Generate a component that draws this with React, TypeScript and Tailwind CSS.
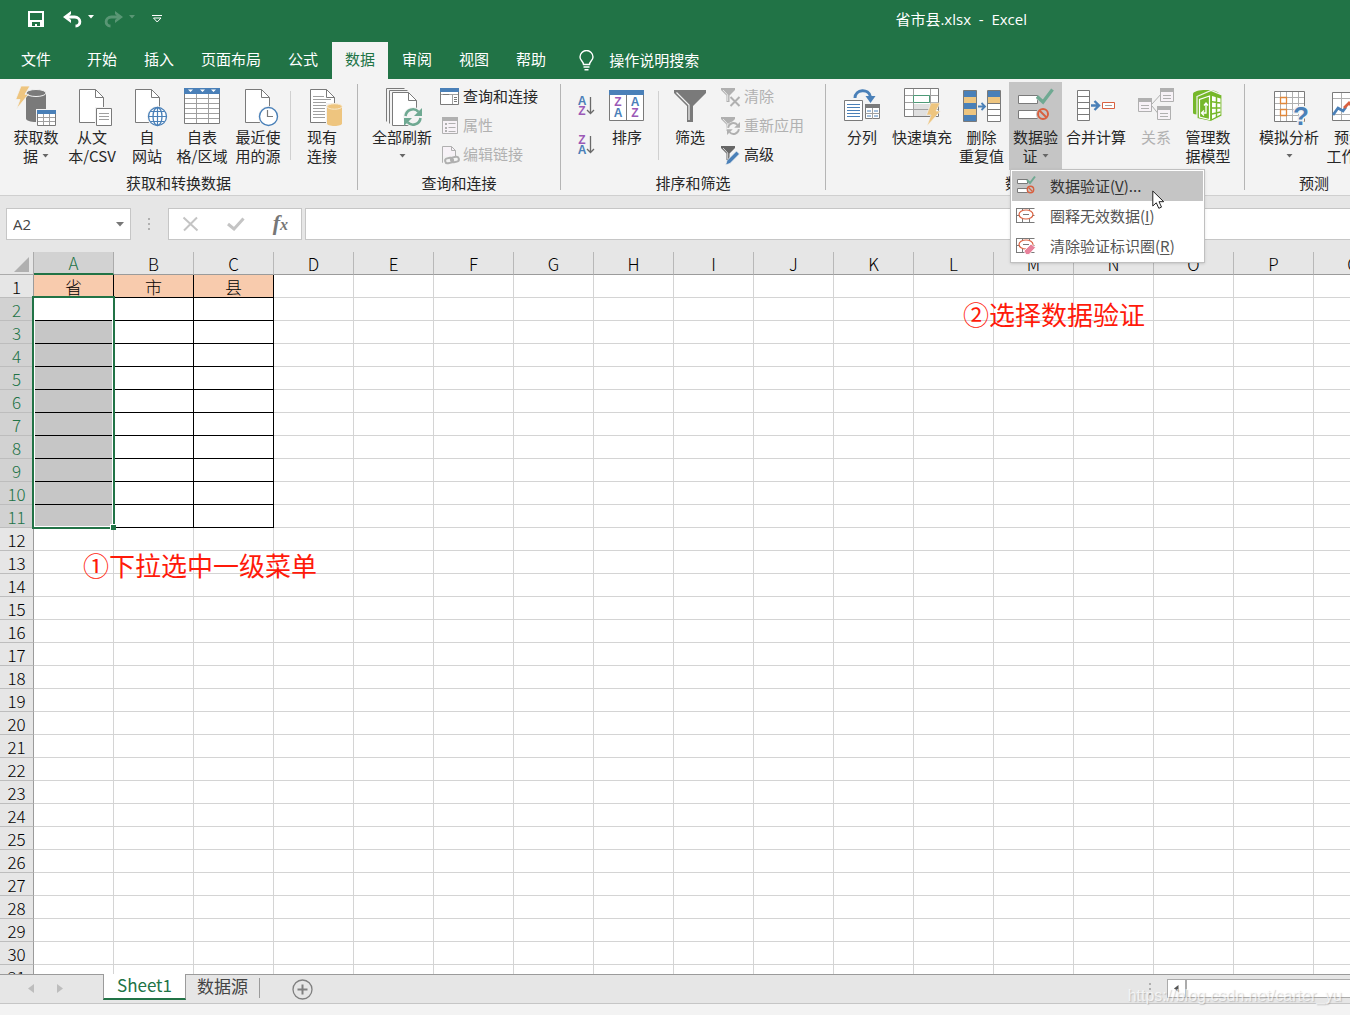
import React from "react";

const COLS = "ABCDEFGHIJKLMNOPQ".split("");
const ROWS = Array.from({ length: 31 }, (_, i) => i + 1);
const HEAD = ["省", "市", "县"];
const GRAY = "#7a7a7a";
const BLUE = "#4a80b8";
const PALE = "#b0b0b0";
const PURPLE = "#9b59b6";
const GREEN = "#6fa992";
const GOLD = "#eec57f";
const RED = "#d9603f";

type Kids = { children?: React.ReactNode };

function Pic({ children }: Kids) {
  return (
    <svg width="44" height="44" viewBox="0 0 44 44" fill="none" className="-mb-px shrink-0" aria-hidden="true">
      {children}
    </svg>
  );
}

function SmallPic({ children }: Kids) {
  return (
    <svg width="22" height="22" viewBox="0 0 22 22" fill="none" className="shrink-0" aria-hidden="true">
      {children}
    </svg>
  );
}

function Caret({ className = "" }: { className?: string }) {
  return (
    <svg width="7" height="4" viewBox="0 0 7 4" className={"inline-block " + className} aria-hidden="true">
      <path d="M0.500 0h6L3.500 3.500z" fill="#666" />
    </svg>
  );
}

/* Page with a folded corner, 25 x 34 */
function Sheet({ x, y = 5 }: { x: number; y?: number }) {
  return (
    <g transform={`translate(${x} ${y})`} stroke={GRAY}>
      <path d="M.5.5h16l8 8v25H.5z" fill="#fff" />
      <path d="M16.500.5v8h8" />
    </g>
  );
}

const GetDataIcon = () => (
  <Pic>
    <path d="M12 9.500v25c0 2 4.500 3.500 10 3.500s10-1.500 10-3.500v-25z" fill={GRAY} />
    <ellipse cx="22" cy="9" rx="10" ry="3.500" fill={GRAY} stroke="#f3f3f3" />
    <path d="M7 2h9l-5 8.300h3.500L2.500 25l3.500-9.500H1.700z" fill={GOLD} stroke="#f3f3f3" strokeWidth=".8" />
    <path d="M22 25h21v18H22z" fill="#f3f3f3" />
    <path d="M23.500 26.500h18v15h-18z" fill="#fff" stroke={GRAY} />
    <path d="M23 26h19v4H23z" fill={BLUE} />
    <path d="M24 33.500h17M24 37.500h17M29.500 30v11M35.500 30v11" stroke="#a0a0a0" />
  </Pic>
);

const FromTextIcon = () => (
  <Pic>
    <Sheet x={9} />
    <path d="M25 23h18v20H25z" fill="#f3f3f3" />
    <path d="M26.500 24.500h15v17h-15z" fill="#fff" stroke={GRAY} />
    <path d="M29 29.500h10M29 32.500h10M29 35.500h10" stroke="#a0a0a0" />
  </Pic>
);

const WebIcon = () => (
  <Pic>
    <Sheet x={10} />
    <circle cx="32.500" cy="32.500" r="10.500" fill="#f3f3f3" />
    <circle cx="32.500" cy="32.500" r="9" fill="#fff" stroke={BLUE} strokeWidth="1.300" />
    <ellipse cx="32.500" cy="32.500" rx="4.500" ry="9" stroke={BLUE} strokeWidth="1.300" />
    <path d="M32.500 23.500v18M23.500 32.500h18M25.500 27.500h14M25.500 37.500h14" stroke={BLUE} strokeWidth="1.200" />
  </Pic>
);

const TableIcon = () => (
  <Pic>
    <path d="M4.500 4.500h35v35h-35z" fill="#fff" stroke={GRAY} />
    <path d="M4 4h36v6H4z" fill={BLUE} />
    <path d="M8 5.500h5L10.500 8zM20 5.500h5L22.500 8zM31 5.500h5L33.500 8z" fill="#fff" />
    <path d="M5 14.500h34M5 19.500h34M5 24.500h34M5 29.500h34M5 34.500h34M16.500 10v29M28.500 10v29" stroke="#a0a0a0" />
  </Pic>
);

const RecentIcon = () => (
  <Pic>
    <Sheet x={9} />
    <circle cx="32.500" cy="32.500" r="10.500" fill="#f3f3f3" />
    <circle cx="32.500" cy="32.500" r="9" fill="#fff" stroke={BLUE} strokeWidth="1.400" />
    <path d="M31.500 26v6.500H37" stroke={GRAY} strokeWidth="1.200" />
  </Pic>
);

const ExistingIcon = () => (
  <Pic>
    <Sheet x={10} />
    <path d="M13 12.500h11M13 15.500h18M13 18.500h13M13 21.500h13M13 24.500h12M13 27.500h12M13 30.500h12M13 33.500h12" stroke="#a0a0a0" />
    <path d="M26 19h17v23H26z" fill="#f3f3f3" />
    <path d="M27 22.500v17c0 1.500 3.400 2.500 7.500 2.500s7.500-1 7.500-2.500v-17z" fill={GOLD} />
    <ellipse cx="34.500" cy="22.500" rx="7.500" ry="2.700" fill={GOLD} stroke="#f8ead0" />
  </Pic>
);

const RefreshArrows = ({ color }: { color: string }) => (
  <g stroke={color} fill={color}>
    <path d="M-7.500-1a7.500 7.500 0 0 1 13-4.200" fill="none" strokeWidth="2.600" />
    <path d="M9-9v8H1z" stroke="none" />
    <path d="M7.500 1a7.500 7.500 0 0 1-13 4.200" fill="none" strokeWidth="2.600" />
    <path d="M-9 9V1h8z" stroke="none" />
  </g>
);

const RefreshAllIcon = () => (
  <Pic>
    <path d="M6.500 37.500v-33h18M9.500 39.500v-33h18" stroke={GRAY} />
    <Sheet x={12} y={8} />
    <circle cx="33" cy="33" r="10" fill="#f3f3f3" />
    <g transform="translate(33 33)">
      <RefreshArrows color={GREEN} />
    </g>
  </Pic>
);

const QueriesIcon = () => (
  <SmallPic>
    <path d="M1.500 2.500h18v16h-18z" fill="#fff" stroke={GRAY} />
    <path d="M1 2h19v4H1z" fill={BLUE} />
    <path d="M2 8.500h17M13.500 9v9" stroke="#a0a0a0" />
    <path d="M15 11.500h3M15 13.500h3M15 15.500h3M4 8.500h6" stroke={GRAY} />
  </SmallPic>
);

const PropsIcon = () => (
  <SmallPic>
    <path d="M3.500 2.500h15v16h-15z" fill="#f7f2f7" stroke={PALE} />
    <path d="M3 2h16v4H3z" fill={PALE} />
    <path d="M9.500 8.500h7M9.500 12.500h7M9.500 16.500h7" stroke={PALE} />
    <path d="M6 8h2v2H6zM6 12h2v2H6zM6 15h2v2H6z" fill={PALE} />
  </SmallPic>
);

const EditLinksIcon = () => (
  <SmallPic>
    <path d="M3.500 2.500h9l4 4v12h-13z" fill="#f7f2f7" stroke={PALE} />
    <path d="M12.500 2.500v4h4" stroke={PALE} />
    <path d="M4 12h17v8H4z" fill="#f3f3f3" />
    <rect x="6" y="14" width="8" height="5" rx="2.500" stroke={PALE} strokeWidth="2" transform="rotate(-12 10 16)" />
    <rect x="12" y="13" width="8" height="5" rx="2.500" stroke={PALE} strokeWidth="2" transform="rotate(-12 16 16)" />
  </SmallPic>
);

function SortPic({ top, bottom }: { top: string; bottom: string }) {
  return (
    <svg width="20" height="24" viewBox="0 0 20 24" fill="none" aria-hidden="true">
      <g fontFamily="Liberation Sans, sans-serif" fontWeight="700" fontSize="12" textAnchor="middle">
        <text x="6" y="11" fill={top === "A" ? BLUE : PURPLE}>{top}</text>
        <text x="6" y="21" fill={bottom === "A" ? BLUE : PURPLE}>{bottom}</text>
      </g>
      <path d="M14.500 3v16M11 16l3.500 3.500L18 16" stroke="#6a6a6a" strokeWidth="1.300" />
    </svg>
  );
}

const SortIcon = () => (
  <Pic>
    <path d="M4.500 6.500h34v30h-34z" fill="#fff" stroke={GRAY} />
    <path d="M4 6h35v5H4z" fill={BLUE} />
    <path d="M21.500 11v25" stroke={GRAY} />
    <g fontFamily="Liberation Sans, sans-serif" fontWeight="700" fontSize="12" textAnchor="middle">
      <text x="13" y="22" fill={PURPLE}>Z</text>
      <text x="13" y="33" fill={BLUE}>A</text>
      <text x="30" y="22" fill={BLUE}>A</text>
      <text x="30" y="33" fill={PURPLE}>Z</text>
    </g>
  </Pic>
);

const FilterIcon = () => (
  <Pic>
    <path d="M6 6h32v3L25 22v16h-6V22L6 9z" fill={GRAY} />
    <path d="M8.500 8.500L21 21v15" stroke="#f3f3f3" strokeWidth="1.200" />
  </Pic>
);

function Funnel({ color }: { color: string }) {
  return (
    <>
      <path d="M1 2h14v2L9.500 9.500V16H6.500V9.500L1 4z" fill={color} />
      <path d="M3 4l4.700 5v6" stroke="#f3f3f3" strokeWidth=".8" />
    </>
  );
}

const ClearIcon = () => (
  <SmallPic>
    <Funnel color={PALE} />
    <path d="M10.500 11l9 9M19.500 11l-9 9" stroke={PALE} strokeWidth="2" />
  </SmallPic>
);

const ReapplyIcon = () => (
  <SmallPic>
    <Funnel color={PALE} />
    <circle cx="13.500" cy="13.500" r="7" fill="#f3f3f3" />
    <g transform="translate(13.500 13.500) scale(.72)">
      <RefreshArrows color={PALE} />
    </g>
  </SmallPic>
);

const AdvancedIcon = () => (
  <SmallPic>
    <Funnel color="#666" />
    <path d="M5.500 21l1.500-4.500L16.500 7l3 3-9.500 9.500z" fill={BLUE} stroke="#f3f3f3" strokeWidth=".8" />
  </SmallPic>
);

const SplitIcon = () => (
  <Pic>
    <path d="M15 14c0-9 14-10 15.500-1" stroke={BLUE} strokeWidth="3" />
    <path d="M25.500 12h10l-5 7z" fill={BLUE} />
    <path d="M4.500 16.500h18v20h-18z" fill="#fff" stroke={GRAY} />
    <path d="M7 20.500h13M7 23.500h13M7 26.500h13M7 29.500h13M7 32.500h13" stroke={BLUE} />
    <path d="M25.500 20.500h14v14h-14z" fill="#fff" stroke={GRAY} />
    <path d="M25 20h15v4H25z" fill={GRAY} />
    <path d="M32.500 24v11M25.500 29.500h14" stroke="#a0a0a0" />
    <path d="M27 27h4M34 27h4M27 32h4M34 32h4" stroke={BLUE} />
  </Pic>
);

const FlashFillIcon = () => (
  <Pic>
    <path d="M4.500 4.500h34v28h-34z" fill="#fff" stroke={GRAY} />
    <path d="M14 20h16v12H14z" fill="#e0e0e0" />
    <path d="M5 11.500h33M5 18.500h33M5 25.500h33M13.500 5v27M30.500 5v27" stroke="#a0a0a0" />
    <path d="M13.500 11.500h16v7h-16z" fill="#fff" stroke="#4e9b78" />
    <path d="M31 19h9l-4 8h4.500L27 42l4-11h-4.500z" fill={GOLD} stroke="#f3f3f3" strokeWidth=".6" />
  </Pic>
);

const DedupeIcon = () => (
  <Pic>
    <path d="M3.500 6.500h13v31h-13z" fill={BLUE} stroke={GRAY} />
    <path d="M4 13h12v6H4zM4 25h12v6H4z" fill={GOLD} />
    <path d="M18 22.500h6M21.500 19l3.500 3.500-3.500 3.500" stroke={BLUE} strokeWidth="1.800" />
    <path d="M27.500 6.500h13v31h-13z" fill="#fff" stroke={GRAY} />
    <path d="M28 7h12v6H28z" fill={BLUE} />
    <path d="M28 13h12v6H28z" fill={GOLD} />
    <path d="M28 19.500h12M28 25.500h12M28 31.500h12" stroke={GRAY} />
  </Pic>
);

const ValidateIcon = () => (
  <Pic>
    <path d="M4.500 11.500h19v8h-19zM4.500 26.500h19v8h-19z" fill="#fff" stroke={GRAY} />
    <path d="M24 12.500l6 6L38.500 6" stroke="#c5c5c5" strokeWidth="6" />
    <path d="M23 12.500l6 5.500L38.500 5.500" stroke={GREEN} strokeWidth="3.400" />
    <circle cx="29" cy="30" r="7" fill="#c5c5c5" />
    <circle cx="29" cy="30" r="5" stroke={RED} strokeWidth="2" />
    <path d="M25.500 26.500l7 7" stroke={RED} strokeWidth="2" />
  </Pic>
);

const ConsolidateIcon = () => (
  <Pic>
    <path d="M3.500 6.500h12v30h-12z" fill="#fff" stroke={GRAY} />
    <path d="M4 12.500h12M4 18.500h12M4 24.500h12M4 30.500h12" stroke={GRAY} />
    <path d="M17 21.500h7M20.500 17l4.500 4.500-4.500 4.500" stroke={BLUE} strokeWidth="2.400" />
    <path d="M28.500 18.500h12v6h-12z" fill="#fff" stroke={RED} />
    <path d="M31 21.500h7" stroke="#a0a0a0" />
  </Pic>
);

const RelationIcon = () => (
  <Pic>
    <path d="M18 20L28 9M18 22l8 10" stroke={PALE} />
    {[[4, 14], [26, 4], [23, 22]].map(([x, y]) => (
      <g key={x} transform={`translate(${x} ${y})`}>
        <path d="M.5.5h13v13H.5z" fill="#f7f2f7" stroke={PALE} />
        <path d="M0 0h14v4H0z" fill={PALE} />
        <path d="M3 7.500h8M3 10.500h8" stroke={PALE} />
      </g>
    ))}
  </Pic>
);

const ModelIcon = () => (
  <Pic>
    <path d="M7 10c0-2.500 6-4 13-4s13 1.500 13 4v18c0 2-5 3-13 3S7 30.500 7 29z" fill="#76b82a" />
    <path d="M11 12.500L25 6.500l11 4.500v21l-11 5.500-14-3z" fill="#76b82a" stroke="#f3f3f3" strokeWidth="1.200" />
    <path d="M13.500 33V15.500l10-3.500v23.500z" stroke="#fff" strokeWidth="1.200" />
    <path d="M26 12l8.500 2.500v16L26 35z" fill="#fff" />
    <path d="M26 17.800l8.500 1.200M26 24h8.500M26 30l8.500-2M30.500 13v20" stroke="#76b82a" strokeWidth="1.500" />
    <path d="M16 29h4V19.500M18 21.500l2-2.500 2 2.500M18 26.500L15.500 29l2.500 2.500" stroke="#fff" strokeWidth="1.300" />
  </Pic>
);

const WhatIfIcon = () => (
  <Pic>
    <path d="M7.500 7.500h30v30h-30z" fill="#fff" stroke={GRAY} />
    <path d="M8 13.500h29M8 19.500h29M8 25.500h29M8 31.500h29M13.500 8v29M19.500 8v29M25.500 8v29M31.500 8v29" stroke="#b0b0b0" />
    <path d="M13.500 13.500h6v6h-6zM13.500 25.500h6v6h-6z" fill="#fff" stroke="#e0873a" strokeWidth="1.300" />
    <text x="34" y="41" fontFamily="Liberation Sans, sans-serif" fontWeight="700" fontSize="26" textAnchor="middle" fill={BLUE} stroke="#f3f3f3" strokeWidth="3" paintOrder="stroke">?</text>
  </Pic>
);

const ForecastIcon = () => (
  <Pic>
    <path d="M5.500 8.500h34v28h-34z" fill="#fff" stroke={GRAY} />
    <path d="M6 14.500h33M6 30.500h33M14.500 9v27M24.500 9v27" stroke="#b0b0b0" />
    <path d="M6 31l5-7 5 3 3-4" stroke={BLUE} strokeWidth="2.800" />
    <path d="M17 24l5-5 5 5 8-8" stroke={RED} strokeWidth="2.800" />
  </Pic>
);

function Big({ icon, lines, className, caret, disabled }: {
  icon: React.ReactNode; lines: string[]; className: string; caret?: boolean; disabled?: boolean;
}) {
  return (
    <button
      disabled={disabled}
      className={"flex h-[88px] shrink-0 flex-col items-center pt-[2px] text-[15px] leading-[19px] whitespace-nowrap disabled:text-[#b1b1b1] " + className}
    >
      {icon}
      {lines.map((line, i) => (
        <span key={line + i} className="flex h-[19px] items-center gap-1">
          {line}
          {caret && i === lines.length - 1 && <Caret />}
        </span>
      ))}
    </button>
  );
}

function Small({ icon, label, disabled }: { icon: React.ReactNode; label: string; disabled?: boolean }) {
  return (
    <button disabled={disabled} className="flex h-[29px] items-center gap-[2px] text-[15px] whitespace-nowrap disabled:text-[#b1b1b1]">
      {icon}
      {label}
    </button>
  );
}

function Group({ title, className, children }: Kids & { title: string; className: string }) {
  return (
    <section aria-label={title} className={"flex shrink-0 flex-col " + className}>
      <div className="flex">{children}</div>
      <h2 className="mt-[3px] text-center text-[15px] leading-[19px]">{title}</h2>
    </section>
  );
}

const GroupRule = () => <div className="mt-[2px] h-[106px] w-px shrink-0 bg-[#b5b5b5]" />;
const InnerRule = () => <div className="mt-[9px] h-[69px] w-px shrink-0 bg-[#d0d0d0]" />;

function MenuItem({ icon, label, hotkey, tail = "", active }: {
  icon: React.ReactNode; label: string; hotkey: string; tail?: string; active?: boolean;
}) {
  return (
    <button
      role="menuitem"
      className={"flex h-[30px] w-full items-center gap-[13px] pl-[3px] text-[15px] whitespace-nowrap " + (active ? "bg-[#c5c5c5] text-[#333]" : "text-[#555]")}
    >
      {icon}
      <span>
        {label}(<u className="underline-offset-2">{hotkey}</u>){tail}
      </span>
    </button>
  );
}

const MenuValidate = () => (
  <SmallPic>
    <path d="M2.500 4.500h10v4h-10zM2.500 13.500h10v4h-10z" fill="#fff" stroke={GRAY} />
    <path d="M12 5l3 3 5-6.500" stroke={GREEN} strokeWidth="2" />
    <circle cx="15.500" cy="14.500" r="3.200" fill="#c5c5c5" stroke={RED} strokeWidth="1.400" />
    <path d="M13.500 12.500l4 4" stroke={RED} strokeWidth="1.300" />
  </SmallPic>
);

const MenuCircle = ({ eraser }: { eraser?: boolean }) => (
  <SmallPic>
    <path d="M1.500 3.500h18M1.500 17.500h18M1.500 3v15M1.500 10.500h18M7.500 3v4M14.500 3v4M7.500 14v4M14.500 14v4" stroke={GRAY} />
    <ellipse cx="11" cy="9.500" rx="7" ry="4.500" fill="#fff" stroke={RED} strokeWidth="1.200" />
    <path d="M8 9.500h6" stroke={GRAY} />
    {eraser && <path d="M9 16l7-7 4.500 3.500-6.500 7h-3z" fill="#e8819a" stroke="#fff" strokeWidth=".8" />}
  </SmallPic>
);

function Pointer() {
  return (
    <svg width="13" height="20" viewBox="0 0 13 20" className="pointer-events-none absolute top-5 left-[141px]" aria-hidden="true">
      <path d="M.8 1v15l3.500-3.200 2.500 5.500 2.700-1.200L7 11.700h4.700z" fill="#fff" stroke="#222" />
    </svg>
  );
}

function TitleBar() {
  return (
    <header className="flex h-[42px] shrink-0 items-center pb-[4px] pl-7 text-white">
      <button aria-label="保存" className="mr-[19px]">
        <svg width="16" height="16" viewBox="0 0 16 16" fill="none" aria-hidden="true">
          <path d="M0 0h16v16H0zM2 2v7h12V2zM4 11v4h3v-2h2v2h3v-4z" fill="#fff" fillRule="evenodd" />
        </svg>
      </button>
      <button aria-label="撤消" className="flex items-center gap-[6px]">
        <svg width="19" height="18" viewBox="0 0 19 18" fill="none" aria-hidden="true">
          <path d="M3 7h8.500c7 0 7 9 1 9" stroke="#fff" strokeWidth="2.800" />
          <path d="M8 1v3L5 7l3 3v3L0 7z" fill="#fff" />
        </svg>
        <svg width="6" height="4" viewBox="0 0 6 4" aria-hidden="true" className="mb-[4px]"><path d="M0 0h6L3 3.500z" fill="#fff" /></svg>
      </button>
      <button aria-label="恢复" disabled className="ml-[10px] flex items-center gap-[6px] opacity-25">
        <svg width="19" height="18" viewBox="0 0 19 18" fill="none" aria-hidden="true">
          <path d="M15 7H7.500c-7 0-7 9-1 9" stroke="#fff" strokeWidth="2.800" />
          <path d="M11 1v3l3 3-3 3v3l8-6z" fill="#fff" />
        </svg>
        <svg width="6" height="4" viewBox="0 0 6 4" aria-hidden="true" className="mb-[4px]"><path d="M0 0h6L3 3.500z" fill="#fff" /></svg>
      </button>
      <button aria-label="自定义快速访问工具栏" className="ml-[17px]">
        <svg width="11" height="8" viewBox="0 0 11 8" fill="none" stroke="#fff" aria-hidden="true">
          <path d="M0 .5h10M1.500 3h7.500L5.200 7z" />
        </svg>
      </button>
      <h1 className="mr-[323px] ml-auto text-[15px] whitespace-pre">
        省市县<span className="font-['Open_Sans',sans-serif]">{".xlsx  -  Excel"}</span>
      </h1>
    </header>
  );
}

function TabBar() {
  const tabs = ["开始", "插入", "页面布局", "公式", "数据", "审阅", "视图", "帮助"];
  return (
    <nav className="flex h-[37px] shrink-0 items-stretch text-[15px] text-white">
      <button className="w-[74px] pb-[2px] pl-[21px] text-left">文件</button>
      <div className="flex gap-px">
        {tabs.map((t) => (
          <button key={t} className={"px-[13px] pb-[2px] " + (t === "数据" ? "bg-[#f3f3f3] text-[#217346]" : "")}>
            {t}
          </button>
        ))}
      </div>
      <button className="ml-5 flex items-center gap-[15px]">
        <svg width="15" height="21" viewBox="0 0 15 21" fill="none" stroke="#fff" strokeWidth="1.400" aria-hidden="true">
          <path d="M4.500 14.500c0-3-3.500-4-3.500-7.500a6.500 6.500 0 0 1 13 0c0 3.500-3.500 4.500-3.500 7.500zM4.500 17h6M5.500 19.800h4" />
        </svg>
        操作说明搜索
      </button>
    </nav>
  );
}

function Ribbon() {
  return (
    <div className="flex h-[117px] shrink-0 border-b border-[#cfcfcf] bg-[#f3f3f3] pt-[3px] text-[#262626]">
      <Group title="获取和转换数据" className="w-[357px]">
        <Big className="ml-2 w-[56px]" icon={<GetDataIcon />} lines={["获取数", "据"]} caret />
        <Big className="w-[56px]" icon={<FromTextIcon />} lines={["从文", "本/CSV"]} />
        <Big className="w-[54px]" icon={<WebIcon />} lines={["自", "网站"]} />
        <Big className="w-[56px]" icon={<TableIcon />} lines={["自表", "格/区域"]} />
        <Big className="mr-1 w-[56px]" icon={<RecentIcon />} lines={["最近使", "用的源"]} />
        <InnerRule />
        <Big className="ml-[3px] w-[56px]" icon={<ExistingIcon />} lines={["现有", "连接"]} />
      </Group>
      <GroupRule />
      <Group title="查询和连接" className="w-[202px]">
        <Big className="ml-[10px] w-[68px]" icon={<RefreshAllIcon />} lines={["全部刷新", ""]} caret />
        <div className="ml-[3px] flex flex-col">
          <Small icon={<QueriesIcon />} label="查询和连接" />
          <Small icon={<PropsIcon />} label="属性" disabled />
          <Small icon={<EditLinksIcon />} label="编辑链接" disabled />
        </div>
      </Group>
      <GroupRule />
      <Group title="排序和筛选" className="w-[264px]">
        <div className="ml-[15px] flex w-5 flex-col gap-[15px] pt-[12px]">
          <button aria-label="升序"><SortPic top="A" bottom="Z" /></button>
          <button aria-label="降序"><SortPic top="Z" bottom="A" /></button>
        </div>
        <Big className="mx-[3px] w-[56px]" icon={<SortIcon />} lines={["排序"]} />
        <InnerRule />
        <Big className="ml-[3px] w-[56px]" icon={<FilterIcon />} lines={["筛选"]} />
        <div className="ml-[2px] flex flex-col">
          <Small icon={<ClearIcon />} label="清除" disabled />
          <Small icon={<ReapplyIcon />} label="重新应用" disabled />
          <Small icon={<AdvancedIcon />} label="高级" />
        </div>
      </Group>
      <GroupRule />
      <Group title="数据工具" className="w-[418px]">
        <Big className="ml-2 w-[56px]" icon={<SplitIcon />} lines={["分列"]} />
        <Big className="w-[64px]" icon={<FlashFillIcon />} lines={["快速填充"]} />
        <Big className="w-[55px]" icon={<DedupeIcon />} lines={["删除", "重复值"]} />
        <div className="relative">
          <Big className="w-[53px] bg-[#c5c5c5]" icon={<ValidateIcon />} lines={["数据验", "证"]} caret />
          <div role="menu" className="absolute top-[87px] left-px z-20 w-[195px] border border-[#c0c0c0] bg-white p-px shadow-sm">
            <MenuItem icon={<MenuValidate />} label="数据验证" hotkey="V" tail="..." active />
            <MenuItem icon={<MenuCircle />} label="圈释无效数据" hotkey="I" />
            <MenuItem icon={<MenuCircle eraser />} label="清除验证标识圈" hotkey="R" />
            <Pointer />
          </div>
        </div>
        <Big className="w-[68px]" icon={<ConsolidateIcon />} lines={["合并计算"]} />
        <Big className="w-[52px]" icon={<RelationIcon />} lines={["关系"]} disabled />
        <Big className="w-[52px]" icon={<ModelIcon />} lines={["管理数", "据模型"]} />
      </Group>
      <GroupRule />
      <Group title="预测" className="w-[138px]">
        <Big className="ml-3 w-[64px]" icon={<WhatIfIcon />} lines={["模拟分析", ""]} caret />
        <Big className="w-[56px]" icon={<ForecastIcon />} lines={["预测", "工作表"]} />
      </Group>
    </div>
  );
}

function FormulaBar() {
  return (
    <div className="flex h-[56px] shrink-0 items-start pt-3 pl-[6px]">
      <div className="flex h-8 w-[125px] items-center border border-[#c6c6c6] bg-white pr-[6px]">
        <input aria-label="名称框" defaultValue="A2" className="w-full min-w-0 pl-[6px] font-['Open_Sans',sans-serif] text-[15px] text-[#444] outline-none" />
        <button aria-label="展开名称框">
          <svg width="8" height="5" viewBox="0 0 8 5" aria-hidden="true"><path d="M0 0h8L4 4.500z" fill="#777" /></svg>
        </button>
      </div>
      <svg width="3" height="14" viewBox="0 0 3 14" className="mt-[9px] ml-[17px]" aria-hidden="true">
        <path d="M0 1h2v2H0zM0 6h2v2H0zM0 11h2v2H0z" fill="#b0b0b0" />
      </svg>
      <div className="ml-[17px] flex h-8 w-[134px] items-center justify-between border border-[#c6c6c6] bg-white px-[13px]">
        <button aria-label="取消">
          <svg width="17" height="16" viewBox="0 0 17 16" stroke="#c4c4c4" strokeWidth="2" aria-hidden="true"><path d="M1.500 1.500l14 13M15 1.500l-13 13" /></svg>
        </button>
        <button aria-label="输入">
          <svg width="18" height="14" viewBox="0 0 18 14" fill="none" stroke="#c4c4c4" strokeWidth="3" aria-hidden="true"><path d="M1 7l6 5L16.500 1.500" /></svg>
        </button>
        <button aria-label="插入函数" className="font-['Liberation_Serif',serif] text-[22px] leading-[24px] font-bold text-[#777] italic">
          f<span className="text-[16px]">x</span>
        </button>
      </div>
      <input aria-label="编辑栏" className="ml-[3px] h-8 min-w-0 flex-1 border border-r-0 border-[#c6c6c6] bg-white px-2 outline-none" />
    </div>
  );
}

function cellClass(row: number, col: number) {
  const base = "border-r border-b p-0 text-center font-light ";
  if (col > 2 || row > 11) return base + "border-[#d4d4d4]";
  if (row === 1) return base + "border-black bg-[#f8cbad] pt-px leading-[21px] text-black";
  if (col === 0 && row > 2) return base + "border-black bg-[#c6c6c6]";
  return base + "border-black";
}

function Grid() {
  return (
    <main className="relative min-h-0 flex-1 overflow-hidden bg-white">
      <table className="w-max table-fixed border-separate border-spacing-0 text-[17px] leading-[22px]">
        <colgroup>
          <col className="w-[34px]" />
          {COLS.map((c) => <col key={c} className="w-[80px]" />)}
        </colgroup>
        <thead>
          <tr className="h-[23px] bg-[#e6e6e6]">
            <th aria-label="全选" className="w-[34px] border-r border-b border-[#ababab] p-0">
              <svg width="16" height="16" viewBox="0 0 16 16" className="mt-1 ml-[14px]" aria-hidden="true"><path d="M15 0v15H0z" fill="#b0b0b0" /></svg>
            </th>
            {COLS.map((c) => (
              <th
                key={c}
                scope="col"
                className={"h-[23px] w-[80px] border-r p-0 pt-px font-light " + (c === "A" ? "border-b-2 border-r-[#ababab] border-b-[#217346] bg-[#d2d2d2] leading-[20px] text-[#217346]" : "border-b border-r-[#b8b8b8] border-b-[#9b9b9b] leading-[21px] text-black")}
              >
                {c}
              </th>
            ))}
          </tr>
        </thead>
        <tbody>
          {ROWS.map((r) => (
            <tr key={r} className="h-[23px]">
              <th
                scope="row"
                className={"h-[23px] border-r border-b border-r-[#9b9b9b] border-b-[#bdbdbd] p-0 pt-px text-center leading-[21px] font-light " + (r > 1 && r < 12 ? "bg-[#d2d2d2] text-[#217346]" : "bg-[#e6e6e6] text-black")}
              >
                {r}
              </th>
              {COLS.map((c, i) => (
                <td key={c} className={cellClass(r, i) + (r === 2 && i === 0 ? " relative" : "")}>
                  {r === 1 ? HEAD[i] : null}
                  {r === 2 && i === 0 && (
                    <div className="pointer-events-none absolute -top-[2px] -left-[2px] z-10 h-[233px] w-[83px] border-2 border-[#217346]">
                      <div className="h-full border border-white" />
                      <div className="absolute -right-[3px] -bottom-[3px] size-[6px] border-t border-l border-white bg-[#217346]" />
                    </div>
                  )}
                </td>
              ))}
            </tr>
          ))}
        </tbody>
      </table>
      <p className="absolute top-[294px] left-[83px] text-[26px] leading-[38px] text-[#ff1a0a]">①下拉选中一级菜单</p>
      <p className="absolute top-[43px] left-[963px] text-[26px] leading-[38px] text-[#ff1a0a]">②选择数据验证</p>
    </main>
  );
}

function SheetBar() {
  return (
    <footer className="relative shrink-0 bg-[#f3f3f3] pb-[11px]">
      <div className="flex h-[30px] items-start border-t border-b border-t-[#9b9b9b] border-b-[#c6c6c6] bg-[#e6e6e6] text-[17px]">
        <div className="flex w-[103px] items-center gap-[23px] pt-[9px] pl-7">
          <button aria-label="上一张工作表"><svg width="6" height="10" viewBox="0 0 6 10" aria-hidden="true"><path d="M6 0v9L0 4.500z" fill="#bdbdbd" /></svg></button>
          <button aria-label="下一张工作表"><svg width="6" height="10" viewBox="0 0 6 10" aria-hidden="true"><path d="M0 0v9l6-4.500z" fill="#bdbdbd" /></svg></button>
        </div>
        <button className="-mt-px h-[26px] w-[83px] border-x border-b-2 border-x-[#9b9b9b] border-b-[#217346] bg-white pb-[2px] leading-[22px] text-[#217346]">Sheet1</button>
        <button className="h-6 px-[11px] pb-[3px] leading-[21px] text-[#444]">数据源</button>
        <div className="mt-[3px] h-5 w-px bg-[#9b9b9b]" />
        <button aria-label="新工作表" className="mt-1 ml-8">
          <svg width="21" height="21" viewBox="0 0 21 21" fill="none" stroke="#808080" aria-hidden="true">
            <circle cx="10.500" cy="10.500" r="9.500" strokeWidth="1.300" />
            <path d="M10.500 5.500v10M5.500 10.500h10" strokeWidth="2" />
          </svg>
        </button>
        <svg width="3" height="14" viewBox="0 0 3 14" className="mt-2 ml-auto" aria-hidden="true">
          <path d="M0 0h2v2H0zM0 5h2v2H0zM0 10h2v2H0z" fill="#b0b0b0" />
        </svg>
        <div className="mt-1 ml-[15px] flex h-[19px] w-[183px] border border-r-0 border-[#ababab] bg-white">
          <button aria-label="向左滚动" className="flex w-[19px] items-center justify-center border-r-2 border-[#ababab]">
            <svg width="5" height="7" viewBox="0 0 5 7" aria-hidden="true"><path d="M4.500 0v7L0 3.500z" fill="#555" /></svg>
          </button>
        </div>
      </div>
      <span className="pointer-events-none absolute right-2 bottom-[10px] font-['Liberation_Sans',sans-serif] text-[16px] leading-[18px] text-white/70 [text-shadow:1px_1px_1px_rgba(120,120,120,0.35)]">
        https://blog.csdn.net/carter_yu
      </span>
    </footer>
  );
}

export default function App() {
  return (
    <div className="flex h-screen flex-col overflow-hidden bg-[#e6e6e6] font-['Noto_Sans_CJK_SC',sans-serif]">
      <div className="bg-[#217346]">
        <TitleBar />
        <TabBar />
      </div>
      <Ribbon />
      <FormulaBar />
      <Grid />
      <SheetBar />
    </div>
  );
}
